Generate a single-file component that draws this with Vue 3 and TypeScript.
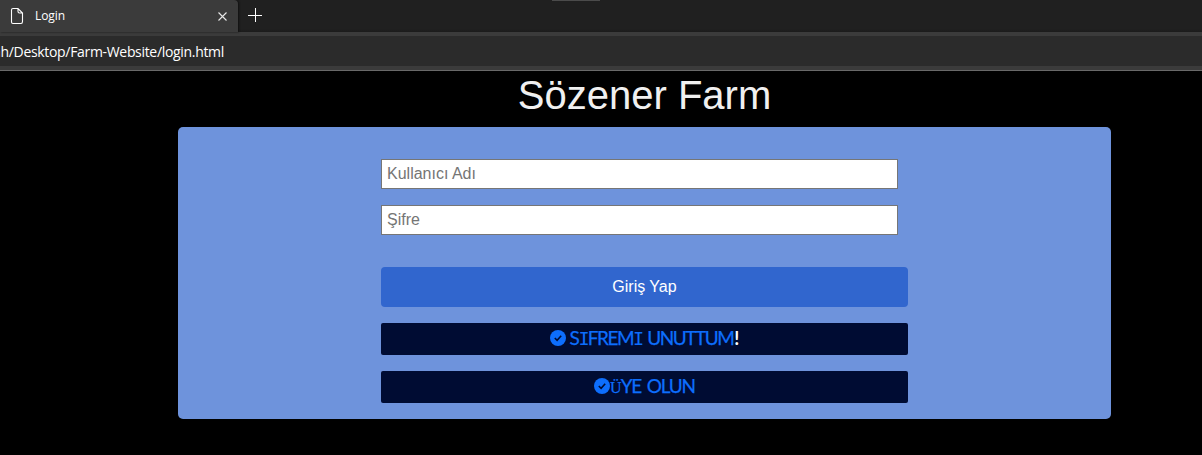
<script setup lang="ts">
import { ref } from 'vue'

const username = ref('')
const password = ref('')
const forgot: string[] = [...'SIFREMI UNUTTUM']
</script>

<template>
  <div class="window">
    <header class="tabs">
      <div class="tab">
        <svg class="page-icon" width="14" height="18" viewBox="0 0 14 18" fill="none" stroke="#fff" stroke-width="1.1">
          <path d="M3 1.5H8L12.5 6V14.5Q12.5 16.5 11 16.5H3Q1.5 16.5 1.5 15V3Q1.5 1.5 3 1.5ZM8 1.5V4.5Q8 6 9.5 6H12.5" />
        </svg>
        <span class="tab-title">Login</span>
        <svg class="close" width="9" height="9" viewBox="0 0 9 9" stroke="#e8e8e8" stroke-width="1.1">
          <path d="M.5 .5L8.5 8.5M8.5 .5L.5 8.5" />
        </svg>
      </div>
      <svg class="plus" width="14" height="14" viewBox="0 0 14 14" stroke="#fff" stroke-width="1">
        <path d="M0 7.5H14M7.5 0V14" />
      </svg>
      <i class="handle"></i>
    </header>
    <div class="toolbar"><div class="address"><span>ah/Desktop/Farm-Website/login.html</span></div></div>
    <main>
      <h1>Sözener Farm</h1>
      <form class="panel" @submit.prevent>
        <input v-model="username" type="text" placeholder="Kullanıcı Adı" />
        <input v-model="password" type="password" placeholder="Şifre" />
        <button type="submit">Giriş Yap</button>
        <div class="link">
          <svg width="16" height="16" viewBox="0 0 16 16"><circle cx="8" cy="8" r="8" fill="#0d6efd" /><path d="M4.8 8L7.1 10.3L11.2 5.8" fill="none" stroke="#000c33" stroke-width="1.6" /></svg>
          <a class="forgot"><span v-for="(c, i) in forgot" :key="i" :class="{ slab: c === 'I' }">{{ c }}</span></a><b>!</b>
        </div>
        <div class="link">
          <svg width="16" height="16" viewBox="0 0 16 16"><circle cx="8" cy="8" r="8" fill="#0d6efd" /><path d="M4.8 8L7.1 10.3L11.2 5.8" fill="none" stroke="#000c33" stroke-width="1.6" /></svg>
          <a class="join"><span class="umlaut">Ü</span>YE OLUN</a>
        </div>
      </form>
    </main>
  </div>
</template>

<style>
body {
  background: #000;
}
</style>

<style scoped>
.window {
  height: 455px;
  overflow: hidden;
  background: #000;
  font-family: "Liberation Sans", Arial, sans-serif;
}
.tabs {
  position: relative;
  display: flex;
  height: 32px;
  background: linear-gradient(#202020 29px, #1b1b1b);
}
.tab {
  box-sizing: border-box;
  display: flex;
  align-items: center;
  width: 238px;
  padding: 0 11px 0 10px;
  background: #3b3b3b;
  border-radius: 0 4px 0 0;
  box-shadow: 1px 0 2px #111;
}
.page-icon {
  margin-right: 11px;
}
.tab-title {
  color: #fff;
  font: 12px/16px "Open Sans", "Noto Sans", sans-serif;
  letter-spacing: -0.1px;
}
.close {
  margin-left: auto;
}
.plus {
  margin: 8px 0 0 10px;
}
.handle {
  position: absolute;
  top: 0;
  left: 552px;
  width: 48px;
  height: 1px;
  background: #4b4b4b;
}
.toolbar {
  box-sizing: border-box;
  height: 39px;
  padding: 4px 0;
  background: #3b3b3b;
  border-bottom: 1px solid #696969;
}
.address {
  display: flex;
  height: 30px;
  background: #2b2b2b;
  color: #fff;
  font: 14px/31px "Open Sans", "Noto Sans", sans-serif;
}
.address span {
  margin-left: -7px;
  letter-spacing: -0.32px;
  white-space: nowrap;
}
main {
  width: 933px;
  margin-left: 178px;
}
h1 {
  margin: 0 0 8px;
  color: #f0f0f0;
  font-size: 40px;
  font-weight: 400;
  line-height: 48px;
  text-align: center;
}
.panel {
  box-sizing: border-box;
  display: flex;
  flex-direction: column;
  gap: 16px;
  height: 292px;
  padding: 32px 203px 16px;
  background: #6e93dc;
  border-radius: 5px;
}
input {
  box-sizing: border-box;
  width: 517px;
  height: 30px;
  padding: 0 5px;
  background: #fff;
  border: 1px solid #767676;
  border-radius: 0;
  color: #222;
  font: 16px "Liberation Sans", Arial, sans-serif;
}
input::placeholder {
  color: #757575;
}
button {
  height: 40px;
  margin-top: 16px;
  padding: 0;
  background: #3166ce;
  border: 0;
  border-radius: 4px;
  color: #fff;
  font: 16px "Liberation Sans", Arial, sans-serif;
}
.link {
  display: flex;
  align-items: center;
  justify-content: center;
  height: 32px;
  background: #000c33;
  border-radius: 2px;
  color: #0d6efd;
  white-space: nowrap;
}
.link svg {
  flex: none;
  margin-top: -2px;
}
.link a {
  margin-top: -2px;
  font: 19px/28px Lato, sans-serif;
  letter-spacing: -1.5px;
  -webkit-text-stroke: 0.25px #0d6efd;
}
.link .forgot {
  margin-left: 4px;
  word-spacing: 1.5px;
}
.link .join {
  letter-spacing: -1.2px;
  word-spacing: 2px;
}
.slab {
  font: 18.5px "DejaVu Sans Mono", monospace;
  font-weight: 200;
  letter-spacing: -1.8px;
  -webkit-text-stroke: 0;
}
.link b {
  margin: -2px 0 0 1px;
  color: #fff;
  font: 700 18px/28px Lato, sans-serif;
}
.umlaut {
  font: 16px "Liberation Serif", serif;
  letter-spacing: -1px;
}
</style>
